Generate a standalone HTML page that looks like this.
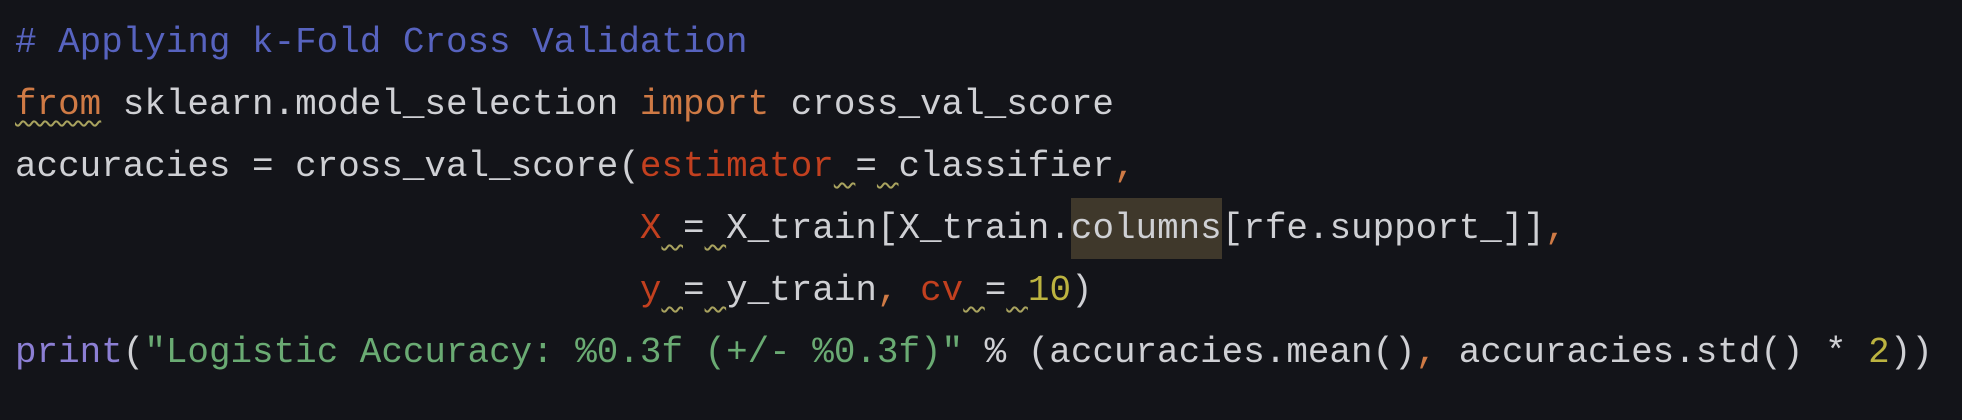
<!DOCTYPE html>
<html><head><meta charset="utf-8"><style>
html,body{margin:0;padding:0;background:#131419;width:1962px;height:420px;overflow:hidden}
pre{margin:0;padding:12px 0 0 15px;font-family:"Liberation Mono",monospace;font-size:35.92px;line-height:62px;color:#cfd0d4;white-space:pre}
.c{color:#5763bf}.k{color:#cf7a45}.p{color:#c2401f}.s{color:#6aab73}.n{color:#bcb340}.f{color:#8c7fd4}.o{color:#cf7a45}
.w{text-decoration:underline wavy #a9a35f;text-decoration-thickness:2px;text-underline-offset:6px}
.h{background:#3f382b;padding:10px 0}
</style></head><body><pre><span class="c"># Applying k-Fold Cross Validation</span>
<span class="k w">from</span> sklearn.model_selection <span class="k">import</span> cross_val_score
accuracies = cross_val_score(<span class="p">estimator</span><span class="w"> </span>=<span class="w"> </span>classifier<span class="o">,</span>
                             <span class="p">X</span><span class="w"> </span>=<span class="w"> </span>X_train[X_train.<span class="h">columns</span>[rfe.support_]]<span class="o">,</span>
                             <span class="p">y</span><span class="w"> </span>=<span class="w"> </span>y_train<span class="o">,</span> <span class="p">cv</span><span class="w"> </span>=<span class="w"> </span><span class="n">10</span>)
<span class="f">print</span>(<span class="s">"Logistic Accuracy: %0.3f (+/- %0.3f)"</span> % (accuracies.mean()<span class="o">,</span> accuracies.std() * <span class="n">2</span>))</pre></body></html>
